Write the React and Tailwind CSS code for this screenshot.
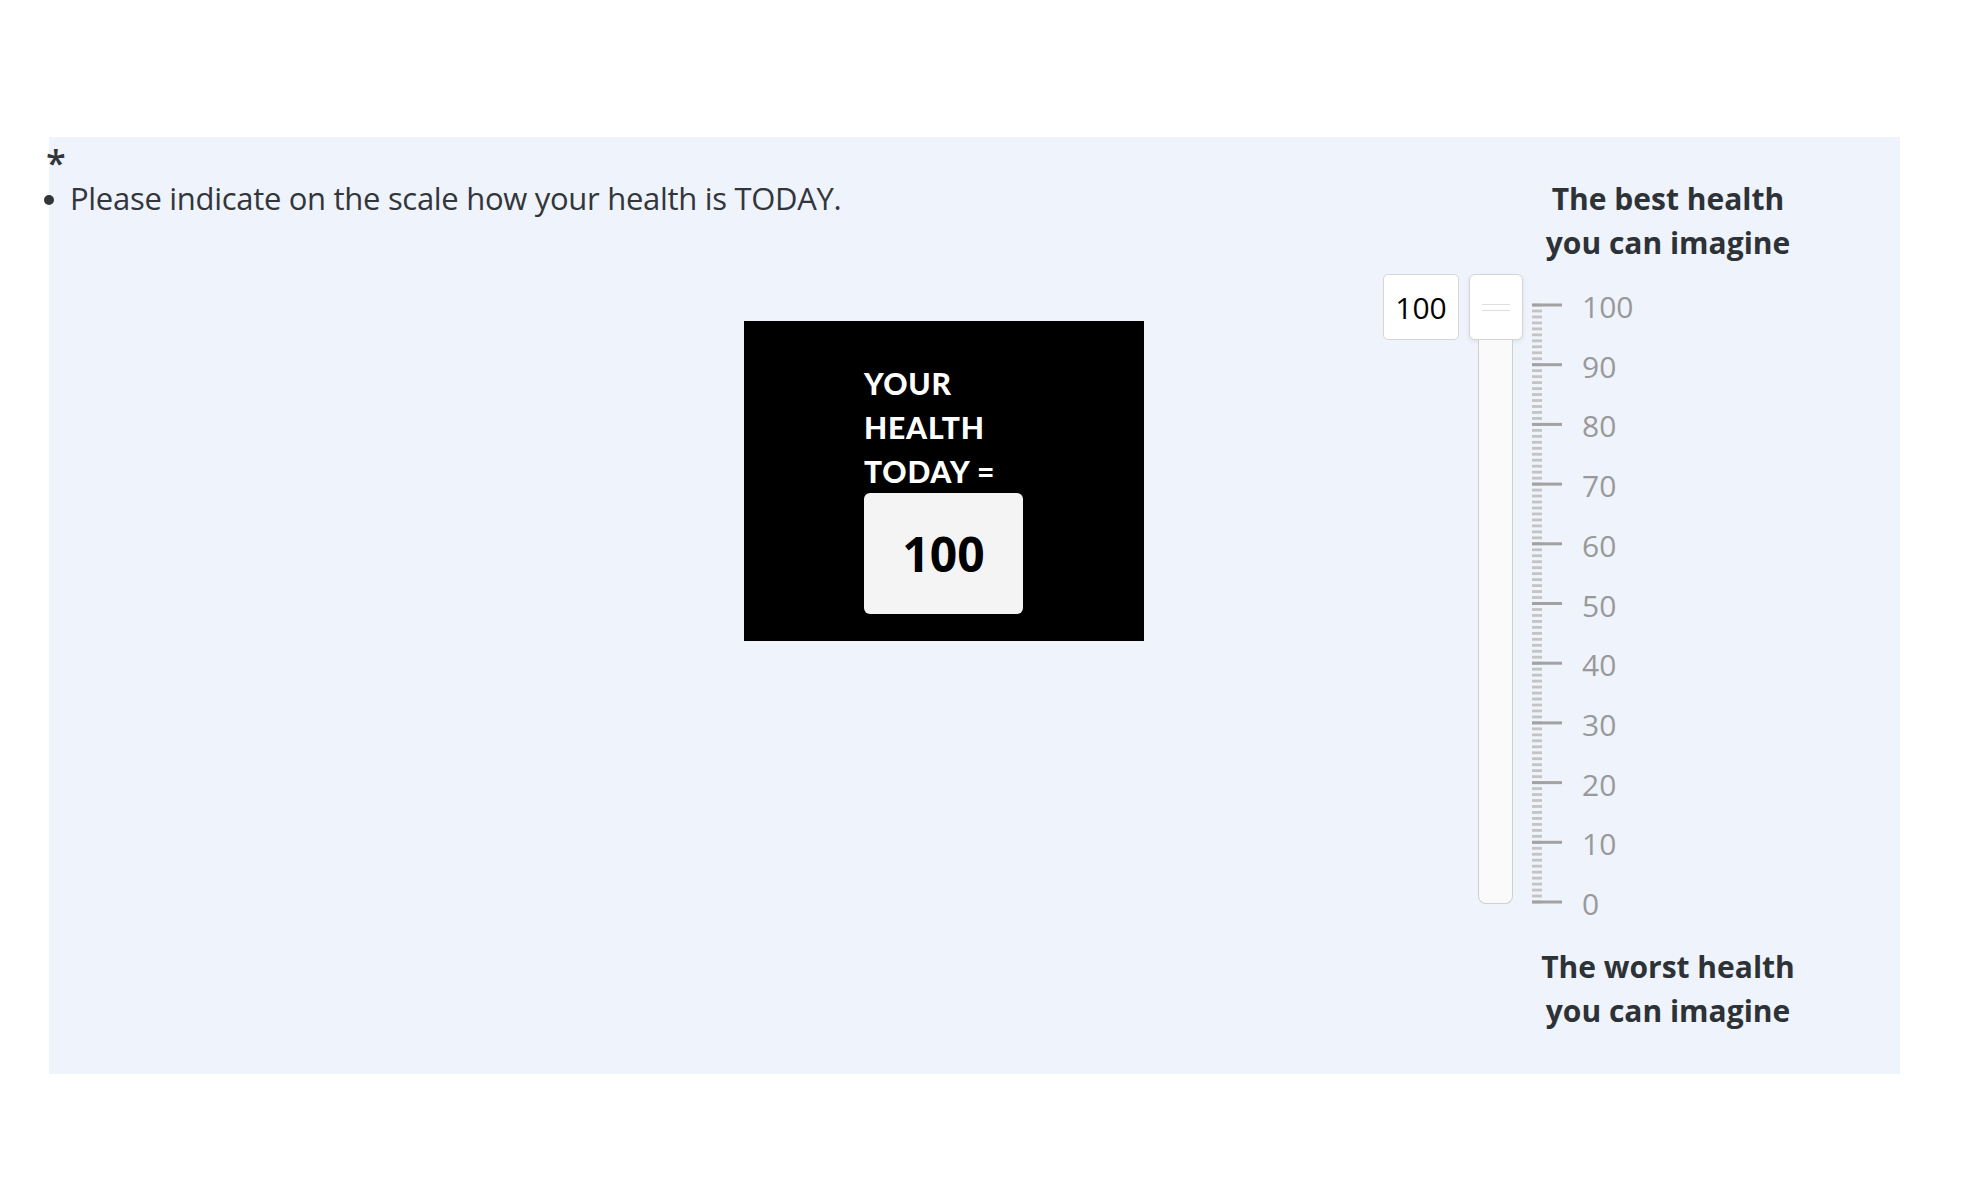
import React from 'react'

// Visual analogue scale: 0..100, one minor tick per unit, a major tick every ten
const TOP_Y = 31        // y of the 100 tick inside the scale box
const STEP = 5.97       // px per unit
const LABELS = [100, 90, 80, 70, 60, 50, 40, 30, 20, 10, 0]

function tickY(v) {
  return TOP_Y + (100 - v) * STEP
}

function Scale() {
  const minor = Array.from({ length: 101 }, (_, i) => i)
  return (
    <div className="relative w-[150px] h-[640px]">
      <svg className="absolute left-0 top-0" width="32" height="640" viewBox="0 0 32 640">
        {minor.map(v => (
          <rect key={v} x="0" y={tickY(v) - 1.4} width="10" height="2.8" fill="#c4c4c4" />
        ))}
        {LABELS.map(v => (
          <rect key={'m' + v} x="0" y={tickY(v) - 1.5} width="30" height="3" fill="#a2a2a2" />
        ))}
      </svg>
      {LABELS.map(v => (
        <span
          key={'l' + v}
          className="absolute left-[50px] -translate-y-1/2 text-[30px] leading-none text-[#999999]"
          style={{ top: tickY(v) + 2 }}
        >
          {v}
        </span>
      ))}
    </div>
  )
}

export default function App() {
  return (
    <div className="min-h-screen bg-white pt-[137px] pl-[49px] font-['Open_Sans',sans-serif]">
      <div className="w-[1851px] h-[937px] bg-[#eef3fc] flex">
        {/* Question + picture */}
        <div className="flex-1 flex flex-col">
          <div className="h-[39px] pt-[12px] -ml-[3px] text-[36px] font-semibold leading-[27px] text-[#32363a]">*</div>
          <div className="flex items-center h-[44px] -ml-[5px]">
            <span className="w-[10px] h-[10px] rounded-full bg-[#32363a] mt-[4px]" />
            <span className="ml-[16px] text-[31px] leading-[44px] tracking-[-0.3px] text-[#32363a]">
              Please indicate on the scale how your health is TODAY.
            </span>
          </div>

          <div className="mt-[101px] ml-[695px] w-[400px] h-[320px] bg-black pt-[40px] pl-[120px]">
            <div className="font-['Lato',sans-serif] font-black text-[30px] leading-[44px] tracking-[0.8px] text-white">
              <div>YOUR</div>
              <div>HEALTH</div>
              <div>TODAY =</div>
            </div>
            <div className="w-[159px] h-[121px] rounded-[6px] bg-[#f4f4f4] flex items-center justify-center">
              <span className="text-[48px] font-bold text-black leading-none">100</span>
            </div>
          </div>
        </div>

        {/* Slider */}
        <div className="w-[517px] pt-[40px] flex flex-col">
          <div className="ml-[135px] w-[300px] text-center text-[30px] font-bold leading-[44px] text-[#2d3237]">
            The best health<br />you can imagine
          </div>

          <div className="mt-[9px] flex items-start h-[640px]">
            <div className="w-[76px] h-[66px] rounded-[5px] border border-[#d6d6d6] bg-white flex items-center justify-center text-[30px] text-black">
              100
            </div>
            <div className="ml-[10px] w-[54px] flex flex-col">
              <div className="h-[66px] rounded-[6px] border border-[#d4d4d4] bg-white shadow-[0_2px_4px_rgba(0,0,0,0.08)] flex flex-col items-center justify-center gap-[5px]">
                <div className="w-[28px] h-[1px] bg-[#dedede]" />
                <div className="w-[28px] h-[1px] bg-[#dedede]" />
              </div>
              <div className="ml-[9px] w-[35px] h-[564px] border border-t-0 border-[#cfcfcf] rounded-b-[8px] bg-[#fafafa]" />
            </div>
            <div className="ml-[9px]">
              <Scale />
            </div>
          </div>

          <div className="mt-[31px] ml-[135px] w-[300px] text-center text-[30px] font-bold leading-[44px] text-[#2d3237]">
            The worst health<br />you can imagine
          </div>
        </div>
      </div>
    </div>
  )
}
